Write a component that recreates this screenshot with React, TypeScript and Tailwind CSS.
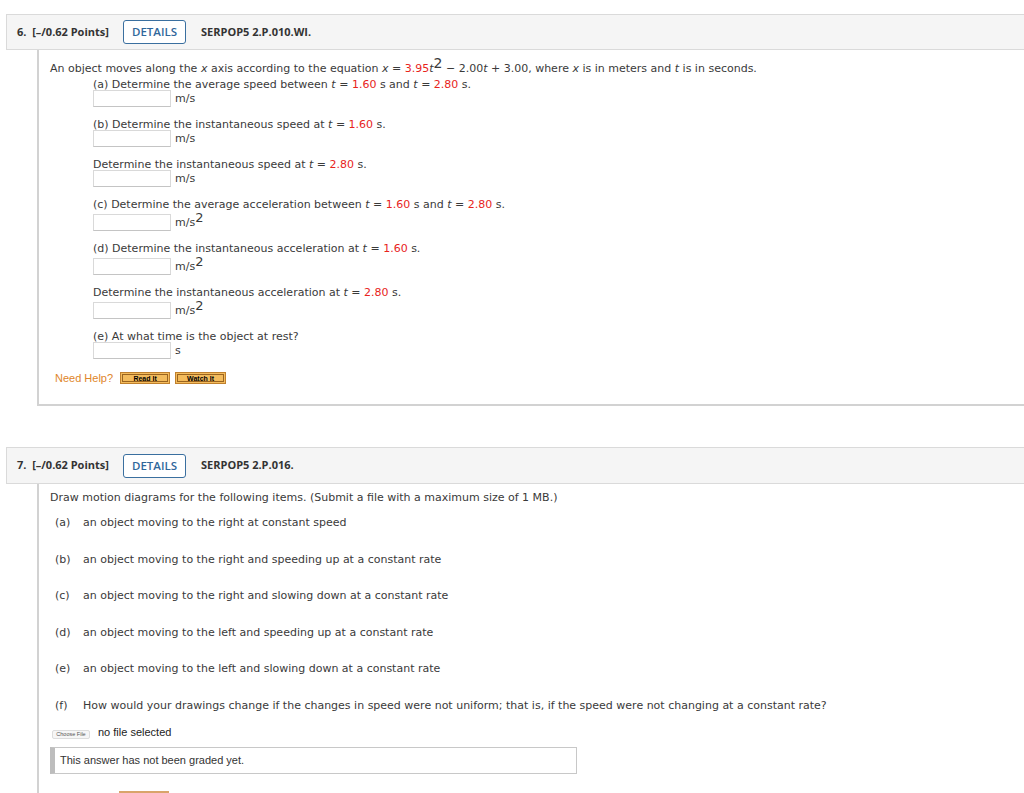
import React from "react";

const R = ({ children }: { children: React.ReactNode }) => (
  <span className="text-[#e8231c]">{children}</span>
);
const I = ({ children }: { children: React.ReactNode }) => <i>{children}</i>;

function Header({ num, code, h }: { num: string; code: string; h: string }) {
  return (
    <div
      className={`${h} ml-[6px] w-[1030px] flex items-center bg-[#f5f5f5] border-t border-b border-l border-[#dadada] font-['Open_Sans'] text-[11px] text-[#333]`}
    >
      <span className="ml-[10px] w-[106px] font-bold whitespace-pre">{num}  [–/0.62 Points]</span>
      <span className="w-[63px] h-[24px] flex items-center justify-center border-[1.5px] border-[#3a6f9f] rounded-[3px] bg-white text-[#2f679b] font-semibold text-[11.5px]">
        DETAILS
      </span>
      <span className="ml-[15px] font-bold">{code}</span>
    </div>
  );
}

function Answer({ unit, sup }: { unit: string; sup?: boolean }) {
  return (
    <div className={`flex items-end ${sup ? "h-[21px]" : "h-[17px]"}`}>
      <div className="w-[78px] h-[17px] border border-[#d9d9d9] border-b-[#c4c4c4] bg-white" />
      <span className="ml-[4px] leading-[17px] relative">
        {unit}
        {sup && <span className="absolute left-full top-[-1px] text-[13px] leading-[9px]">2</span>}
      </span>
    </div>
  );
}

function Item({ children, unit, sup }: { children: React.ReactNode; unit: string; sup?: boolean }) {
  return (
    <div className="ml-[54px] mb-[13px]">
      <div className="h-[10px] leading-[10px] whitespace-nowrap">{children}</div>
      <Answer unit={unit} sup={sup} />
    </div>
  );
}

function Btn({ label, w }: { label: string; w: string }) {
  return (
    <div className={`${w} h-[12px] border border-[#c0802c] bg-[#f3bb5c] p-[1px] flex`}>
      <div className="flex-1 border border-[#9a6420] flex items-center justify-center text-[7px] font-bold text-black font-['Liberation_Sans'] leading-none">
        {label}
      </div>
    </div>
  );
}

function Sub({ l, children }: { l: string; children: React.ReactNode }) {
  return (
    <div className="flex h-[36.6px] items-start">
      <span className="ml-[5px] w-[28px]">{l}</span>
      <span className="whitespace-nowrap">{children}</span>
    </div>
  );
}

export default function App() {
  return (
    <div className="w-[1024px] h-[793px] overflow-hidden bg-white font-['DejaVu_Sans'] text-[11px] text-[#3a3a3a]">
      <div className="h-[14px]" />
      <Header num="6." code="SERPOP5 2.P.010.WI." h="h-[36px]" />
      <div className="ml-[37px] w-[1000px] border-l-2 border-b-2 border-[#d2d2d2] pt-[12px] pb-[20px]">
        <div className="ml-[11px] h-[18px] leading-[10px] whitespace-nowrap">
          An object moves along the <I>x</I> axis according to the equation <I>x</I> ={" "}
          <R>3.95</R>
          <I>t</I>
          <span className="relative top-[-4px] text-[14px] leading-[10px]">2</span> − 2.00<I>t</I> + 3.00, where{" "}
          <I>x</I> is in meters and <I>t</I> is in seconds.
        </div>
        <Item unit="m/s">
          (a) Determine the average speed between <I>t</I> = <R>1.60</R> s and <I>t</I> = <R>2.80</R> s.
        </Item>
        <Item unit="m/s">
          (b) Determine the instantaneous speed at <I>t</I> = <R>1.60</R> s.
        </Item>
        <Item unit="m/s">
          Determine the instantaneous speed at <I>t</I> = <R>2.80</R> s.
        </Item>
        <Item unit="m/s" sup>
          (c) Determine the average acceleration between <I>t</I> = <R>1.60</R> s and <I>t</I> = <R>2.80</R> s.
        </Item>
        <Item unit="m/s" sup>
          (d) Determine the instantaneous acceleration at <I>t</I> = <R>1.60</R> s.
        </Item>
        <Item unit="m/s" sup>
          Determine the instantaneous acceleration at <I>t</I> = <R>2.80</R> s.
        </Item>
        <Item unit="s">(e) At what time is the object at rest?</Item>
        <div className="flex items-center h-[12px] ml-[16px] gap-[5px]">
          <span className="font-['Liberation_Sans'] text-[11px] text-[#e0862a] mr-[2px]">Need Help?</span>
          <Btn label="Read It" w="w-[50px]" />
          <Btn label="Watch It" w="w-[51px]" />
        </div>
      </div>
      <div className="h-[41px]" />
      <Header num="7." code="SERPOP5 2.P.016." h="h-[37px]" />
      <div className="ml-[37px] w-[1000px] h-[400px] border-l-2 border-[#d2d2d2] pt-[6px]">
        <div className="ml-[11px] h-[25px] whitespace-nowrap">
          Draw motion diagrams for the following items. (Submit a file with a maximum size of 1 MB.)
        </div>
        <div className="ml-[11px]">
          <Sub l="(a)">an object moving to the right at constant speed</Sub>
          <Sub l="(b)">an object moving to the right and speeding up at a constant rate</Sub>
          <Sub l="(c)">an object moving to the right and slowing down at a constant rate</Sub>
          <Sub l="(d)">an object moving to the left and speeding up at a constant rate</Sub>
          <Sub l="(e)">an object moving to the left and slowing down at a constant rate</Sub>
          <div className="flex h-[27px] items-start">
            <span className="ml-[5px] w-[28px]">(f)</span>
            <span className="whitespace-nowrap">
              How would your drawings change if the changes in speed were not uniform; that is, if the speed were not changing at a constant rate?
            </span>
          </div>
          <div className="flex items-center h-[14px] font-['Liberation_Sans'] text-[#222]">
            <span className="ml-[2px] w-[38px] h-[9px] mt-[5px] border border-[#ddd] rounded-[2px] bg-[#f6f6f6] text-[5.5px] leading-[7px] text-center text-[#555]">
              Choose File
            </span>
            <span className="ml-[8px] text-[11px]">no file selected</span>
          </div>
          <div className="mt-[8px] w-[527px] h-[27px] border border-[#c8c8c8] border-l-[5px] border-l-[#bdbdbd] flex items-center pl-[5px] font-['Liberation_Sans'] text-[11px] text-[#333]">
            This answer has not been graded yet.
          </div>
          <div className="ml-[69px] mt-[17px] w-[50px] h-[4px] border-t-2 border-[#d9a46a] bg-[#f8e9d8]" />
        </div>
      </div>
    </div>
  );
}
